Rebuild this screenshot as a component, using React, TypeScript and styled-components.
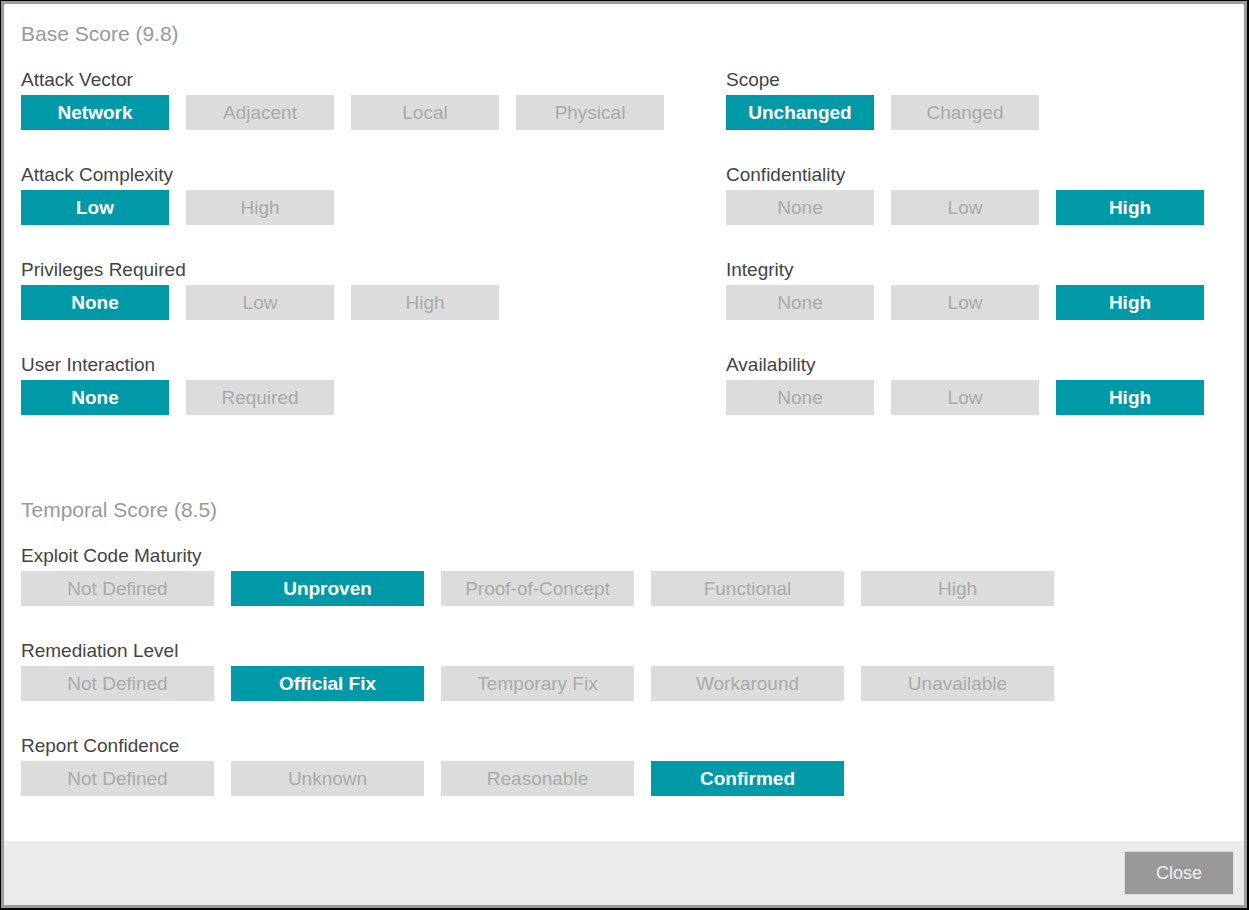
import * as React from "react";
import styled, { createGlobalStyle } from "styled-components";

const GlobalStyle = createGlobalStyle`
    html, body {
        margin: 0;
        padding: 0;
        height: 100%;
        overflow: hidden;
        background: #000;
    }
    body {
        font-family: "Liberation Sans", Arial, sans-serif;
    }
`;

const TEAL = "#0099a8";

interface Metric {
    label: string;
    options: string[];
    selected: string;
}

const baseGauche: Metric[] = [
    { label: "Attack Vector", options: ["Network", "Adjacent", "Local", "Physical"], selected: "Network" },
    { label: "Attack Complexity", options: ["Low", "High"], selected: "Low" },
    { label: "Privileges Required", options: ["None", "Low", "High"], selected: "None" },
    { label: "User Interaction", options: ["None", "Required"], selected: "None" },
];

const baseDroite: Metric[] = [
    { label: "Scope", options: ["Unchanged", "Changed"], selected: "Unchanged" },
    { label: "Confidentiality", options: ["None", "Low", "High"], selected: "High" },
    { label: "Integrity", options: ["None", "Low", "High"], selected: "High" },
    { label: "Availability", options: ["None", "Low", "High"], selected: "High" },
];

const temporel: Metric[] = [
    { label: "Exploit Code Maturity", options: ["Not Defined", "Unproven", "Proof-of-Concept", "Functional", "High"], selected: "Unproven" },
    { label: "Remediation Level", options: ["Not Defined", "Official Fix", "Temporary Fix", "Workaround", "Unavailable"], selected: "Official Fix" },
    { label: "Report Confidence", options: ["Not Defined", "Unknown", "Reasonable", "Confirmed"], selected: "Confirmed" },
];

const Cadre = styled.div`
    box-sizing: border-box;
    height: 910px;
    padding: 1px 2px 2px 1px;
    background: #000;
`;

const Dialogue = styled.div`
    box-sizing: border-box;
    height: 100%;
    border: 3px solid #9a9a9a;
    background: #fff;
    display: flex;
    flex-direction: column;
`;

const Corps = styled.div`
    flex: 1;
    padding: 18px 17px 0 17px;
`;

const Titre = styled.div`
    font-size: 21px;
    line-height: 24px;
    color: #999;
    margin-bottom: 22px;
`;

const Section = styled.div`
    & + & {
        margin-top: 50px;
    }
`;

const Colonnes = styled.div`
    display: grid;
    grid-template-columns: 705px 1fr;
`;

const Ligne = styled.div`
    margin-bottom: 33px;
`;

const Libelle = styled.div`
    font-size: 19px;
    line-height: 22px;
    padding-top: 1px;
    color: #444;
    margin-bottom: 4px;
`;

const Options = styled.div`
    display: flex;
    gap: 17px;
`;

const Option = styled.div<{ $actif: boolean; $large?: boolean }>`
    box-sizing: border-box;
    width: ${(p) => (p.$large ? 193 : 148)}px;
    height: 35px;
    padding-top: 1px;
    line-height: 34px;
    text-align: center;
    font-size: 19px;
    font-weight: ${(p) => (p.$actif ? "bold" : "normal")};
    background: ${(p) => (p.$actif ? TEAL : "#dcdcdc")};
    color: ${(p) => (p.$actif ? "#fff" : "#aaa")};
    cursor: pointer;
    white-space: nowrap;
`;

const Pied = styled.div`
    height: 64px;
    box-sizing: border-box;
    padding: 10px;
    background: #ebebeb;
    display: flex;
    justify-content: flex-end;
`;

const BoutonFermer = styled.button`
    width: 110px;
    height: 44px;
    background: #999;
    border: 1px solid #dcdcdc;
    color: #f2f2f2;
    font-family: "Liberation Sans", Arial, sans-serif;
    font-size: 18px;
    cursor: pointer;
`;

function LigneMetrique({ m, large }: { m: Metric; large?: boolean }) {
    return (
        <Ligne>
            <Libelle>{m.label}</Libelle>
            <Options>
                {m.options.map((o) => (
                    <Option key={o} $actif={o === m.selected} $large={large}>
                        {o}
                    </Option>
                ))}
            </Options>
        </Ligne>
    );
}

export default function App() {
    return (
        <Cadre>
            <GlobalStyle />
            <Dialogue>
                <Corps>
                    <Section>
                        <Titre>Base Score (9.8)</Titre>
                        <Colonnes>
                            <div>
                                {baseGauche.map((m) => <LigneMetrique key={m.label} m={m} />)}
                            </div>
                            <div>
                                {baseDroite.map((m) => <LigneMetrique key={m.label} m={m} />)}
                            </div>
                        </Colonnes>
                    </Section>
                    <Section>
                        <Titre>Temporal Score (8.5)</Titre>
                        {temporel.map((m) => <LigneMetrique key={m.label} m={m} large />)}
                    </Section>
                </Corps>
                <Pied>
                    <BoutonFermer>Close</BoutonFermer>
                </Pied>
            </Dialogue>
        </Cadre>
    );
}
